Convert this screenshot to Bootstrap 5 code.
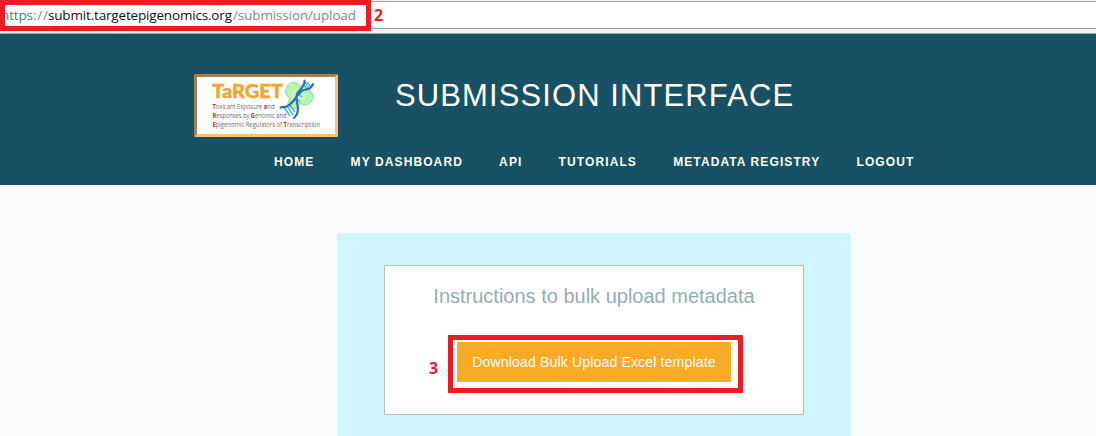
<!DOCTYPE html>
<html lang="en">
<head>
<meta charset="utf-8">
<meta name="viewport" content="width=device-width, initial-scale=1">
<title>Submission Interface</title>
<link href="https://cdn.jsdelivr.net/npm/bootstrap@5.3.0/dist/css/bootstrap.min.css" rel="stylesheet">
<style>
body{background:#fafbfd;font-family:"Liberation Sans",Arial,sans-serif;height:436px;overflow:hidden}
.address-bar{height:34px;background:#f2f2f2;border-bottom:1px solid #a9a9ab;padding-top:1px}
.address-field{height:28px;background:#fff;border-top:1px solid #a2a2a4;border-bottom:1px solid #a2a2a4}
.url-callout{left:0;top:0;width:371px;height:31px;border:5px solid #ed1c24;background:#fff;overflow:hidden}
.url-callout svg,.brand-logo svg{display:block}
.callout-num{font:bold 16px/20px "Open Sans",sans-serif;color:#ed1c24}
.num-two{left:374px;top:5px}
.num-three{left:-24px;top:18px}
.site-header{height:151px;background:#185066;color:#fffff0}
.header-top{padding:40px 0 0 194px}
.brand-logo{width:144px;height:63px;border:3px solid;border-color:#a2804f #f3c277 #f3c277 #a2804f;border-radius:2px;background:#fff}
.site-title{font-size:31px;line-height:36px;letter-spacing:1.1px;margin:4px 0 0 57px;font-weight:400;white-space:nowrap}
.site-nav{padding-left:274px;margin-top:16px;gap:36.2px}
.site-nav .nav-link{padding:0;color:#fffff0;font-size:12px;line-height:18px;font-weight:700;letter-spacing:1.1px;white-space:nowrap}
.panel{width:514px;height:220px;margin:48px 0 0 337px;padding:32px 47px;background:#cff6ff;border-radius:2px}
.upload-box{height:150px;border:1px solid #bdbdbd;background:#fff;padding-top:17px}
.upload-title{font-size:20px;line-height:26px;color:#92aeb5;margin:0;font-weight:400;white-space:nowrap}
.button-callout{width:295px;height:58px;margin:26px 0 0 63px;border:5px solid #ed1c24;padding:2px 4px}
.btn-download{width:274px;height:40px;padding:0;border:0;border-radius:0;background:#fbaa26;color:#fff;font-size:14px;line-height:40px;letter-spacing:.17px;white-space:nowrap}
.btn-download:hover{background:#fbaa26;color:#fff}
</style>
</head>
<body>
<div class="address-bar position-relative">
  <div class="address-field"></div>
  <div class="url-callout position-absolute">
    <svg width="361" height="21" font-family="'Open Sans',sans-serif" font-size="13.5">
      <text x="-4" y="15" fill="#3c8765" textLength="32">https</text>
      <text x="28" y="15" fill="#858585" textLength="15">://</text>
      <text x="43" y="15" fill="#111" textLength="184">submit.targetepigenomics.org</text>
      <text x="228" y="15" fill="#858585" textLength="123">/submission/upload</text>
    </svg>
  </div>
  <span class="callout-num num-two position-absolute">2</span>
</div>
<header class="site-header">
  <div class="header-top d-flex align-items-start">
    <a class="brand-logo flex-shrink-0" href="#" aria-label="TaRGET">
      <svg width="138" height="57" viewBox="0 0 138 57">
        <g fill="#b9f3b2" stroke="#86e58f" stroke-width="1"><circle cx="97" cy="14" r="8.5"/><circle cx="108" cy="20" r="8"/><circle cx="97" cy="26" r="6"/></g>
        <circle cx="101" cy="19" r="7" fill="#c8f6c2"/>
        <g stroke="#4db4cf" stroke-width="1.5" fill="none"><path d="M87 30l6 9M90 29l6 9M93 28l5 7M98 20l5 5M101 16l4 4M106 7l4 5M108 5l4 7M110 5l4 5"/></g>
        <path d="M82.7 30.3C91 31 95 26 98.7 21S104 13 109 12.5Q114 12 116.3 6.3" fill="none" stroke="#2c69b4" stroke-width="2.2"/>
        <path d="M96.3 41.3Q101 38 101 31.5C101 27 98 23 100 17C102 12 108 11 107.7 2.7" fill="none" stroke="#2f72b9" stroke-width="2.2"/>
        <text x="15" y="21" font-family="Lato,sans-serif" font-weight="900" font-size="18" fill="#efa52f" stroke="#efa52f" stroke-width=".4" textLength="71" lengthAdjust="spacingAndGlyphs">TaRGET</text>
        <g font-family="'Open Sans',sans-serif" font-size="7.4" fill="#716b68">
          <text x="15.5" y="31.5" textLength="62" lengthAdjust="spacingAndGlyphs"><tspan fill="#944b22" font-weight="700">T</tspan>oxicant Exposure <tspan fill="#944b22" font-weight="700">a</tspan>nd</text>
          <text x="15.5" y="41" textLength="74" lengthAdjust="spacingAndGlyphs"><tspan fill="#944b22" font-weight="700">R</tspan>esponses by <tspan fill="#944b22" font-weight="700">G</tspan>enomic and</text>
          <text x="15.5" y="50" textLength="107.5" lengthAdjust="spacingAndGlyphs"><tspan fill="#944b22" font-weight="700">E</tspan>pigenomic Regulators of <tspan fill="#944b22" font-weight="700">T</tspan>ranscription</text>
        </g>
      </svg>
    </a>
    <h1 class="site-title">SUBMISSION INTERFACE</h1>
  </div>
  <nav class="nav site-nav flex-nowrap">
    <a class="nav-link" href="#">HOME</a>
    <a class="nav-link" href="#">MY DASHBOARD</a>
    <a class="nav-link" href="#">API</a>
    <a class="nav-link" href="#">TUTORIALS</a>
    <a class="nav-link" href="#">METADATA REGISTRY</a>
    <a class="nav-link" href="#">LOGOUT</a>
  </nav>
</header>
<main class="panel">
  <section class="upload-box">
    <h2 class="upload-title text-center">Instructions to bulk upload metadata</h2>
    <div class="button-callout position-relative">
      <span class="callout-num num-three position-absolute">3</span>
      <button class="btn btn-download d-block" type="button">Download Bulk Upload Excel template</button>
    </div>
  </section>
</main>
<script src="https://cdn.jsdelivr.net/npm/bootstrap@5.3.0/dist/js/bootstrap.bundle.min.js"></script>
</body>
</html>
